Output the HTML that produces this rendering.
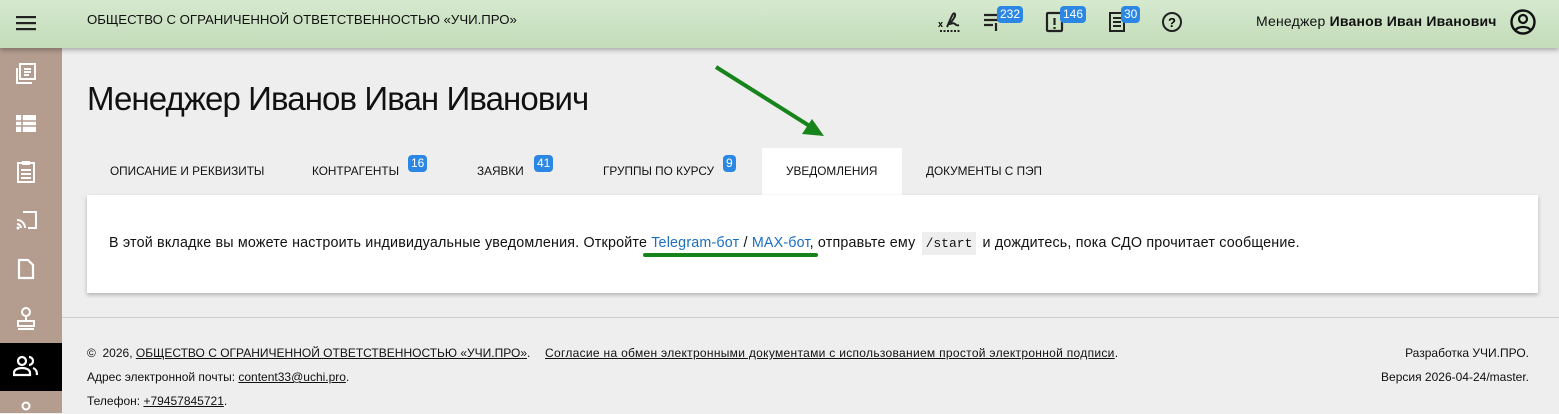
<!DOCTYPE html>
<html><head><meta charset="utf-8">
<style>
*{margin:0;padding:0;box-sizing:border-box}
body{width:1559px;height:413px;overflow:hidden;background:#eeeeee;font-family:"Liberation Sans","DejaVu Sans",sans-serif;color:#111;position:relative}
.a{position:absolute;white-space:nowrap}
.hdr{position:absolute;left:0;top:0;width:1559px;height:48px;background:linear-gradient(#d5e9cf,#c4dcb9);box-shadow:0 2px 5px rgba(0,0,0,.3);z-index:2}
.side{position:absolute;left:0;top:48px;width:62px;height:365px;background:#b49c8f}
.badge{position:absolute;background:#2b87e3;color:#fff;font-size:12px;border-radius:4px;padding:1px 3px;line-height:15px}
.tab{position:absolute;top:148px;height:47px;font-size:11.8px;line-height:47px;text-transform:uppercase}
.card{position:absolute;left:87px;top:195px;width:1451px;height:98px;background:#fff;box-shadow:0 2px 4px rgba(0,0,0,.25)}
a{color:#1a6fc2;text-decoration:none}
.f{font-size:12px;color:#111}
.f u{text-decoration:underline}
svg{position:absolute}
</style></head><body>
<div class="hdr">
 <svg style="left:16px;top:15px" width="20" height="16"><rect y="1" width="20" height="2.2" fill="#222"/><rect y="7" width="20" height="2.2" fill="#222"/><rect y="13" width="20" height="2.2" fill="#222"/></svg>
 <div class="a" style="left:87px;top:12px;font-size:13.2px">ОБЩЕСТВО С ОГРАНИЧЕННОЙ ОТВЕТСТВЕННОСТЬЮ «УЧИ.ПРО»</div>
 <svg style="left:938px;top:9px" width="24" height="26"><text x="0" y="18" font-size="9" font-family="Liberation Sans" font-weight="bold">x</text><path d="M9 18c2-4 4-10 6-13 2-2 3 1 1 4l-4 6c2 0 3-2 5 0 1 1 2 2 4 1" stroke="#222" stroke-width="2" fill="none"/><path d="M2 22h20" stroke="#222" stroke-dasharray="2 1.5" stroke-width="2"/></svg>
 <svg style="left:984px;top:12px" width="20" height="20"><path d="M0 3h14M0 8h14M0 13h9M12 11v8" stroke="#222" stroke-width="2.2"/></svg>
 <div class="badge" style="left:997px;top:6px">232</div>
 <svg style="left:1045px;top:10px" width="20" height="24"><rect x="2" y="3" width="15" height="18" fill="none" stroke="#222" stroke-width="2.2" rx="1"/><path d="M9.5 8v7M9.5 17v2" stroke="#222" stroke-width="2.2"/></svg>
 <div class="badge" style="left:1060px;top:6px">146</div>
 <svg style="left:1108px;top:11px" width="20" height="22"><rect x="2" y="2" width="14" height="18" fill="none" stroke="#222" stroke-width="2"/><path d="M5 7h8M5 11h8M5 15h8" stroke="#222" stroke-width="2"/></svg>
 <div class="badge" style="left:1121px;top:6px">30</div>
 <svg style="left:1161px;top:11px" width="22" height="22"><circle cx="11" cy="11" r="9" fill="none" stroke="#222" stroke-width="2"/><text x="11" y="16" font-size="13" font-weight="bold" text-anchor="middle" font-family="Liberation Sans">?</text></svg>
 <div class="a" style="left:1256px;top:13px;font-size:14px;letter-spacing:0.2px">Менеджер <b>Иванов Иван Иванович</b></div>
 <svg style="left:1509px;top:8px" width="28" height="28"><circle cx="14" cy="14" r="11.5" fill="none" stroke="#111" stroke-width="2.4"/><circle cx="14" cy="11" r="4" fill="none" stroke="#111" stroke-width="2.2"/><path d="M6.5 22c3-4 12-4 15 0" fill="none" stroke="#111" stroke-width="2.2"/></svg>
</div>
<div class="side">
 <svg style="left:15px;top:15px" width="22" height="22"><rect x="5" y="1" width="15" height="15" fill="none" stroke="#fff" stroke-width="2"/><path d="M2 5v15h15M9 6h7M9 9h7M9 12h5" stroke="#fff" stroke-width="2" fill="none"/></svg>
 <svg style="left:15px;top:66px" width="22" height="20"><rect x="1" y="1" width="20" height="17" fill="#fff"/><path d="M1 7h20M1 12h20M7 1v17" stroke="#b49c8f" stroke-width="1.6"/></svg>
 <svg style="left:16px;top:112px" width="20" height="24"><rect x="2" y="3" width="16" height="19" fill="none" stroke="#fff" stroke-width="2"/><rect x="6" y="1" width="8" height="4" fill="#fff"/><path d="M5 10h10M5 14h10M5 18h10" stroke="#fff" stroke-width="2"/></svg>
 <svg style="left:16px;top:162px" width="22" height="20"><path d="M7 2h13v16h-8" stroke="#fff" stroke-width="2" fill="none"/><path d="M1 10a8 8 0 0 1 8 8M1 14a4 4 0 0 1 4 4" stroke="#fff" stroke-width="2" fill="none"/><circle cx="2" cy="18" r="1.5" fill="#fff"/></svg>
 <svg style="left:17px;top:210px" width="18" height="22"><path d="M2 2h9l5 5v13H2z" fill="none" stroke="#fff" stroke-width="2.2"/></svg>
 <svg style="left:15px;top:258px" width="22" height="24"><circle cx="11" cy="6" r="4" fill="none" stroke="#fff" stroke-width="2"/><path d="M11 10v4M3 15h16v5H3zM3 23h16" stroke="#fff" stroke-width="2" fill="none"/></svg>
 <div style="position:absolute;left:0;top:295px;width:62px;height:48px;background:#000"></div>
 <svg style="left:13px;top:307px" width="26" height="22"><circle cx="9" cy="6" r="4" fill="none" stroke="#fff" stroke-width="2.2"/><path d="M1 20v-2c0-4 5-5 8-5s8 1 8 5v2zM16 2a4 4 0 0 1 0 8M20 13c3 1 4 3 4 7" stroke="#fff" stroke-width="2.2" fill="none"/></svg>
 <svg style="left:18px;top:352px" width="16" height="14"><circle cx="8" cy="6" r="3.5" fill="none" stroke="#fff" stroke-width="2"/></svg>
</div>
<div class="a" style="left:87px;top:80px;font-size:33px;letter-spacing:-0.9px">Менеджер Иванов Иван Иванович</div>
<svg style="left:700px;top:60px" width="140" height="90"><path d="M16 7L116 70" stroke="#16841a" stroke-width="4"/><path d="M124 76l-22-2 10-15z" fill="#16841a"/></svg>
<div class="tab a" style="left:110px">Описание и реквизиты</div>
<div class="tab a" style="left:312px">Контрагенты</div>
<div class="badge" style="left:408px;top:155px">16</div>
<div class="tab a" style="left:477px">Заявки</div>
<div class="badge" style="left:534px;top:155px">41</div>
<div class="tab a" style="left:603px">Группы по курсу</div>
<div class="badge" style="left:723px;top:155px">9</div>
<div style="position:absolute;left:762px;top:148px;width:140px;height:48px;background:#fff"></div>
<div class="tab a" style="left:786px">Уведомления</div>
<div class="tab a" style="left:926px">Документы с ПЭП</div>
<div class="card"></div>
<div class="a" style="left:109px;top:235px;font-size:14.3px;letter-spacing:0.18px">В этой вкладке вы можете настроить индивидуальные уведомления. Откройте <a>Telegram-бот</a> / <a>MAX-бот</a>, отправьте ему <span style="font-family:'Liberation Mono',monospace;font-size:13px;background:#eee;padding:4px 4px;margin:0 2px;letter-spacing:0">/start</span> и дождитесь, пока СДО прочитает сообщение.</div>
<div style="position:absolute;left:643px;top:253px;width:175px;height:4px;border-radius:2px;background:#16841a"></div>
<div style="position:absolute;left:62px;top:317px;width:1497px;height:1px;background:#ccc"></div>
<div class="a f" style="left:87px;top:346px">©&nbsp; 2026, <u>ОБЩЕСТВО С ОГРАНИЧЕННОЙ ОТВЕТСТВЕННОСТЬЮ «УЧИ.ПРО»</u>.</div>
<div class="a f" style="left:545px;top:346px;letter-spacing:0.3px"><u>Согласие на обмен электронными документами с использованием простой электронной подписи</u>.</div>
<div class="a f" style="left:87px;top:370px">Адрес электронной почты: <u>content33@uchi.pro</u>.</div>
<div class="a f" style="left:87px;top:394px">Телефон: <u>+79457845721</u>.</div>
<div class="a f" style="right:30px;top:346px">Разработка УЧИ.ПРО.</div>
<div class="a f" style="right:30px;top:370px">Версия 2026-04-24/master.</div>
</body></html>
